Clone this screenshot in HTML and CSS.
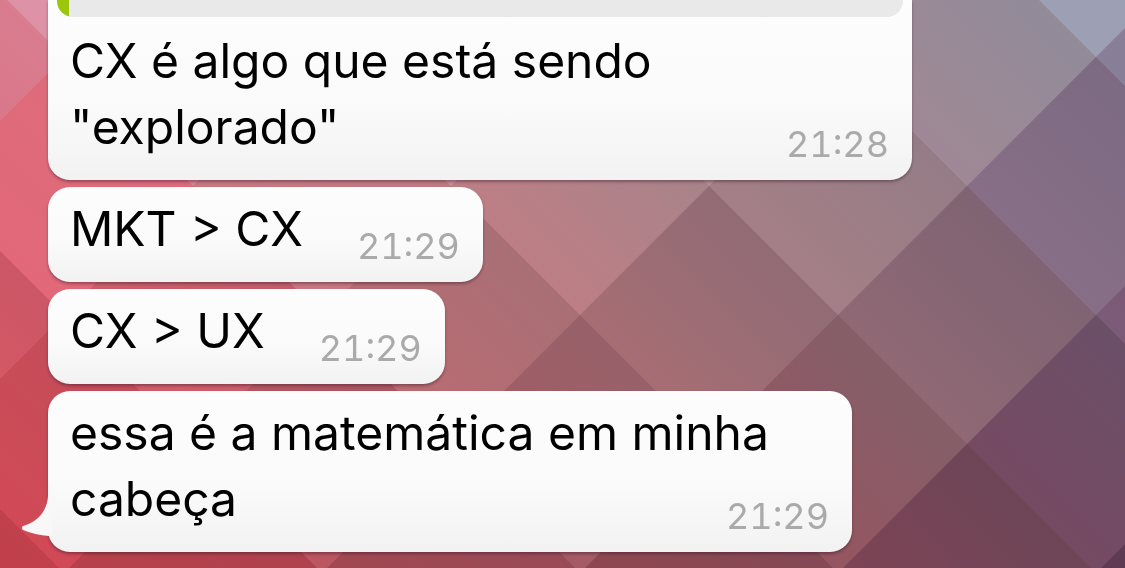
FILE: index.html
```
<!DOCTYPE html>
<html lang="pt-BR">
<head>
<meta charset="utf-8">
<meta name="viewport" content="width=device-width, initial-scale=1">
<title>Conversa</title>
<link rel="stylesheet" href="styles.css">
</head>
<body>
<svg class="wallpaper" viewBox="0 0 1125 568" preserveAspectRatio="xMinYMin slice" aria-hidden="true"></svg>
<main class="chat">
  <article class="bubble bubble--quote">
    <div class="quote"></div>
    <div class="body">
      <p class="text"><span>CX é algo que está sendo</span> <span>"explorado"</span></p>
      <time class="time">21:28</time>
    </div>
  </article>
  <article class="bubble">
    <div class="body body--line">
      <p class="text">MKT &gt; CX</p>
      <time class="time">21:29</time>
    </div>
  </article>
  <article class="bubble">
    <div class="body body--line">
      <p class="text">CX &gt; UX</p>
      <time class="time">21:29</time>
    </div>
  </article>
  <article class="bubble bubble--last">
    <svg class="tail" viewBox="0 0 30 60" aria-hidden="true"><path d="M26 0V13C25 29 15 39 1 43Q-1 45 1 47Q13 52 27 53L30 54V0Z" fill="#f8f8f8"/></svg>
    <div class="body">
      <p class="text"><span>essa é a matemática em minha</span> <span>cabeça</span></p>
      <time class="time">21:29</time>
    </div>
  </article>
</main>
<script src="wallpaper.js"></script>
</body>
</html>
```

FILE: wallpaper.js
```
// Each tile: centre x, centre y, lower-left colour, upper-right colour.
const tiles = [
  [64, -71, '#dd8fa4', '#dda0b4'], [322, -71, '#d090a0', '#c898a8'],
  [580, -71, '#b090a0', '#a8909c'], [838, -71, '#a08c98', '#968c9a'],
  [1096, -71, '#9e9fb3', '#98a0b8'],
  [-65, 58, '#dc7285', '#d97d90'], [193, 58, '#dc8490', '#cf8494'],
  [451, 58, '#cd929a', '#b88c98'], [709, 58, '#b8929a', '#a08c98'],
  [967, 58, '#a28895', '#908b9a'], [1225, 58, '#8a7f99', '#827c96'],
  [64, 187, '#e36878', '#dc6c7c'], [322, 187, '#cb7780', '#bd7c84'],
  [580, 187, '#c17d84', '#a5848b'], [838, 187, '#a77f86', '#927c87'],
  [1096, 187, '#896f87', '#7a6a82'],
  [-65, 316, '#e05a66', '#c95665'], [193, 316, '#d35f6b', '#c05e69'],
  [451, 316, '#bd6b71', '#a57076'], [709, 316, '#aa6e73', '#8e6b76'],
  [967, 316, '#926975', '#7d6372'], [1225, 316, '#7c5b76', '#745a76'],
  [64, 445, '#d34955', '#c04e5b'], [322, 445, '#bf5660', '#a85762'],
  [580, 445, '#a85a63', '#95626a'], [838, 445, '#98545f', '#82606a'],
  [1096, 445, '#774962', '#695068'],
  [-65, 574, '#c43c45', '#bf404c'], [193, 574, '#b8404b', '#ad424d'],
  [451, 574, '#a44751', '#964b56'], [709, 574, '#914650', '#824a55'],
  [967, 574, '#804354', '#6b4658'], [1225, 574, '#5f3b52', '#5a3c54']
];

const ns = 'http://www.w3.org/2000/svg';
const wallpaper = document.querySelector('.wallpaper');
const make = (name, attrs, parent) => {
  const el = document.createElementNS(ns, name);
  for (const key in attrs) el.setAttribute(key, attrs[key]);
  parent.appendChild(el);
  return el;
};
const r = 130;

tiles.forEach(([x, y, low, high], i) => {
  const gradient = make('linearGradient', { id: 'tile' + i, x1: .18, y1: .82, x2: .82, y2: .18 }, wallpaper);
  make('stop', { offset: 0, 'stop-color': low }, gradient);
  make('stop', { offset: 1, 'stop-color': high }, gradient);
  make('polygon', {
    points: `${x},${y - r} ${x + r},${y} ${x},${y + r} ${x - r},${y}`,
    fill: `url(#tile${i})`
  }, wallpaper);
});
```

FILE: styles.css
```
* {
  box-sizing: border-box;
}

body {
  margin: 0;
  min-height: 100vh;
  overflow: hidden;
  background: #a87078;
  font-family: Inter, "Liberation Sans", sans-serif;
}

.wallpaper {
  position: fixed;
  inset: 0;
  z-index: -1;
  width: 100%;
  height: 100%;
}

.chat {
  display: flex;
  flex-direction: column;
  align-items: flex-start;
  gap: 7px;
  padding: 0 48px;
}

.bubble {
  position: relative;
  max-width: 864px;
  border-radius: 22px;
  background: linear-gradient(#fdfdfd, #fafafa 60%, #f2f2f2);
  box-shadow: 0 2px 3px rgba(50, 20, 40, 0.4);
}

.bubble--quote {
  width: 100%;
  border-radius: 0 0 22px 22px;
}

.bubble--last {
  max-width: 804px;
}

.quote {
  height: 17px;
  margin: 0 9px;
  border-radius: 0 0 16px 16px;
  background: linear-gradient(90deg, #9bc60b 12px, #e9e9e9 12px);
}

.body {
  display: grid;
  padding: 9px 23px 20px 22px;
}

.bubble--quote .body {
  padding-top: 11px;
}

.body--line {
  display: flex;
  gap: 54px;
}

.text,
.time {
  grid-area: 1 / 1;
  margin: 0;
}

.text {
  color: #000;
  font-size: 48px;
  line-height: 66px;
}

.time {
  place-self: end;
  margin-bottom: -7px;
  color: #aaa;
  font-size: 36px;
  font-variant-numeric: tabular-nums;
  line-height: 46px;
}

.tail {
  position: absolute;
  left: -26px;
  bottom: 9px;
  width: 30px;
  height: 60px;
  overflow: visible;
}
```
